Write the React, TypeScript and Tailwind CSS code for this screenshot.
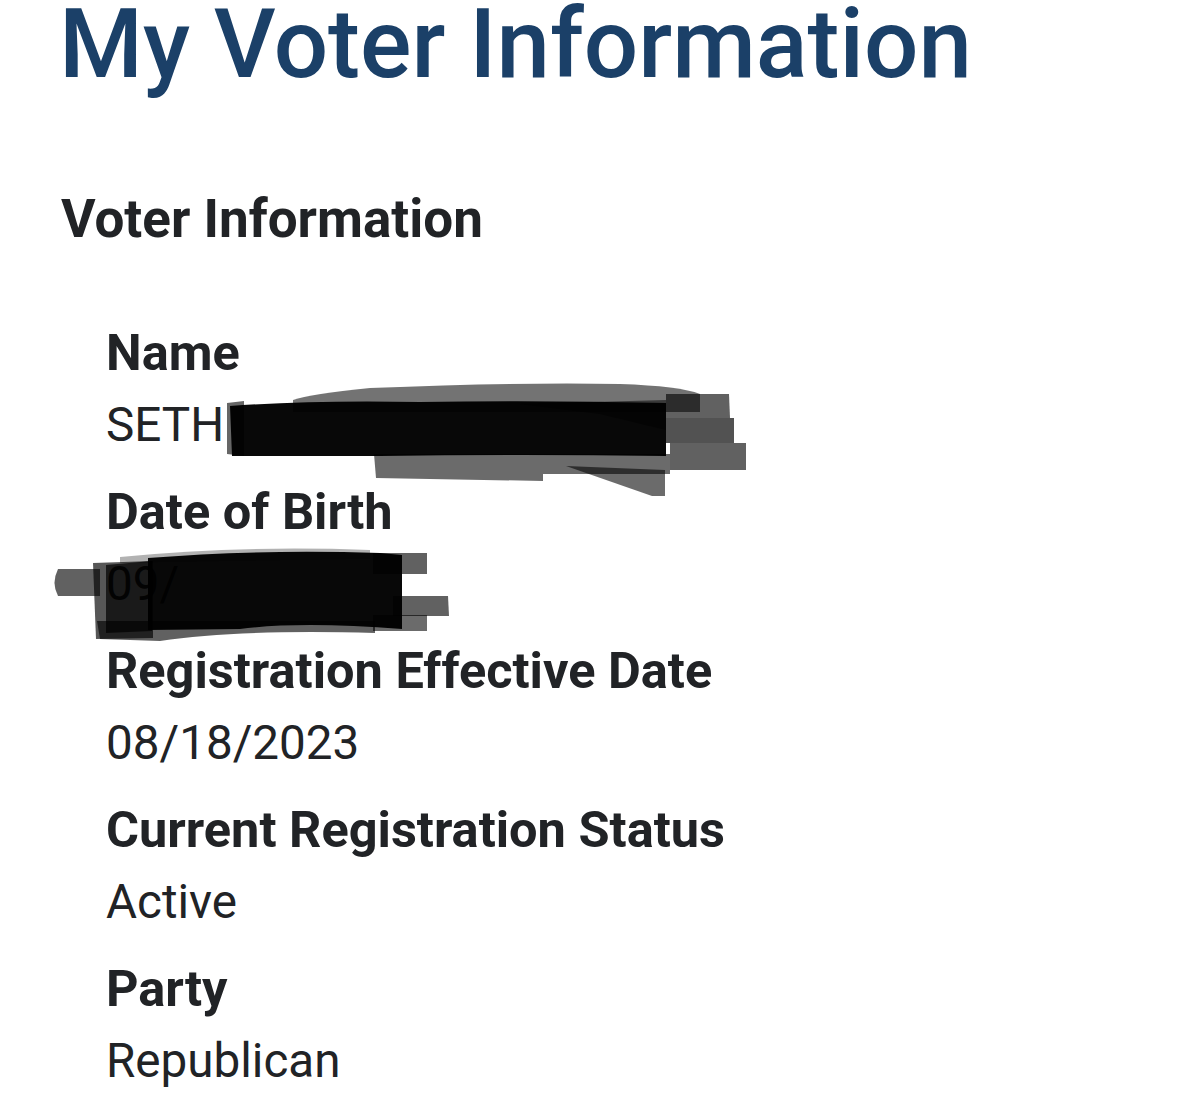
import React from "react";

type Field = {
  label: string;
  value: string;
  redaction?: "name" | "dob";
};

const fields: Field[] = [
  { label: "Name", value: "SETH", redaction: "name" },
  { label: "Date of Birth", value: "09/", redaction: "dob" },
  { label: "Registration Effective Date", value: "08/18/2023" },
  { label: "Current Registration Status", value: "Active" },
  { label: "Party", value: "Republican" },
];

// marker scribble over the surname
const NameScribble = () => (
  <svg
    className="absolute left-[114px] top-[-19px] pointer-events-none"
    width="540"
    height="130"
    viewBox="0 0 540 130"
  >
    <g fill="#000">
      <path d="M73 30 Q 90 24 150 18 Q 300 12 400 14 Q 460 16 480 24 L 480 42 L 73 42 Z" fillOpacity="0.55" />
      <path d="M7 33 L 24 31 L 24 86 L 7 84 Z" fillOpacity="0.6" />
      <path d="M10 36 Q 90 30 200 32 Q 320 30 446 33 L 446 86 Q 300 84 160 86 L 12 86 Z" fillOpacity="0.97" />
      <path d="M446 24 L 509 24 L 510 48 L 446 48 Z" fillOpacity="0.62" />
      <path d="M446 48 L 514 48 L 514 73 L 446 73 Z" fillOpacity="0.68" />
      <path d="M450 73 L 526 73 L 526 100 L 450 100 Z" fillOpacity="0.62" />
      <path d="M154 84 L 323 84 L 323 111 L 156 108 Z" fillOpacity="0.58" />
      <path d="M323 84 L 450 84 L 450 104 L 323 104 Z" fillOpacity="0.58" />
      <path d="M346 96 L 445 100 L 445 126 L 432 126 Z" fillOpacity="0.58" />
      <path d="M300 34 L 446 30 L 446 60 L 380 44 Z" fillOpacity="0.5" />
    </g>
  </svg>
);

// marker scribble over the birth date
const DobScribble = () => (
  <svg
    className="absolute left-[-66px] top-[-7px] pointer-events-none"
    width="420"
    height="105"
    viewBox="0 0 420 105"
  >
    <g fill="#000">
      <path d="M80 16 Q 200 4 330 9 L 330 18 L 80 22 Z" fillOpacity="0.3" />
      <path d="M18 28 L 60 28 L 60 55 L 18 55 Q 11 42 18 28 Z" fillOpacity="0.62" />
      <path d="M53 22 L 113 20 L 113 97 L 56 98 Z" fillOpacity="0.66" />
      <path d="M66 24 L 112 20 L 112 90 L 66 92 Z" fillOpacity="0.7" />
      <path d="M108 17 Q 220 8 340 12 L 362 14 L 362 88 Q 260 80 200 88 L 108 89 Z" fillOpacity="0.97" />
      <path d="M333 12 L 387 12 L 387 33 L 333 33 Z" fillOpacity="0.62" />
      <path d="M353 55 L 408 55 L 409 75 L 353 75 Z" fillOpacity="0.62" />
      <path d="M333 74 L 387 74 L 387 90 L 333 90 Z" fillOpacity="0.58" />
      <path d="M57 80 L 335 80 L 335 92 Q 200 88 120 100 L 60 98 Z" fillOpacity="0.62" />
    </g>
  </svg>
);

export default function App() {
  return (
    <div
      className="min-h-[1111px] w-[1179px] bg-white overflow-hidden"
      style={{ fontFamily: "Roboto, 'Noto Sans', sans-serif" }}
    >
      <div className="pl-[59px]">
        <h1 className="text-[96px] leading-[88px] font-medium text-[#1b4068] whitespace-nowrap">
          My Voter Information
        </h1>
      </div>

      <div className="pl-[61px] mt-[95px]">
        <h2 className="text-[53px] leading-[72px] font-bold text-[#212326]">
          Voter Information
        </h2>

        <dl className="mt-[62px] pl-[45px] flex flex-col gap-[15px] text-[#212326]">
          {fields.map((f) => (
            <div key={f.label}>
              <dt className="text-[50.5px] leading-[72px] font-bold whitespace-nowrap">
                {f.label}
              </dt>
              <dd className="relative text-[47.6px] leading-[72px] font-normal whitespace-nowrap">
                {f.value}
                {f.redaction === "name" && <NameScribble />}
                {f.redaction === "dob" && <DobScribble />}
              </dd>
            </div>
          ))}
        </dl>
      </div>
    </div>
  );
}
